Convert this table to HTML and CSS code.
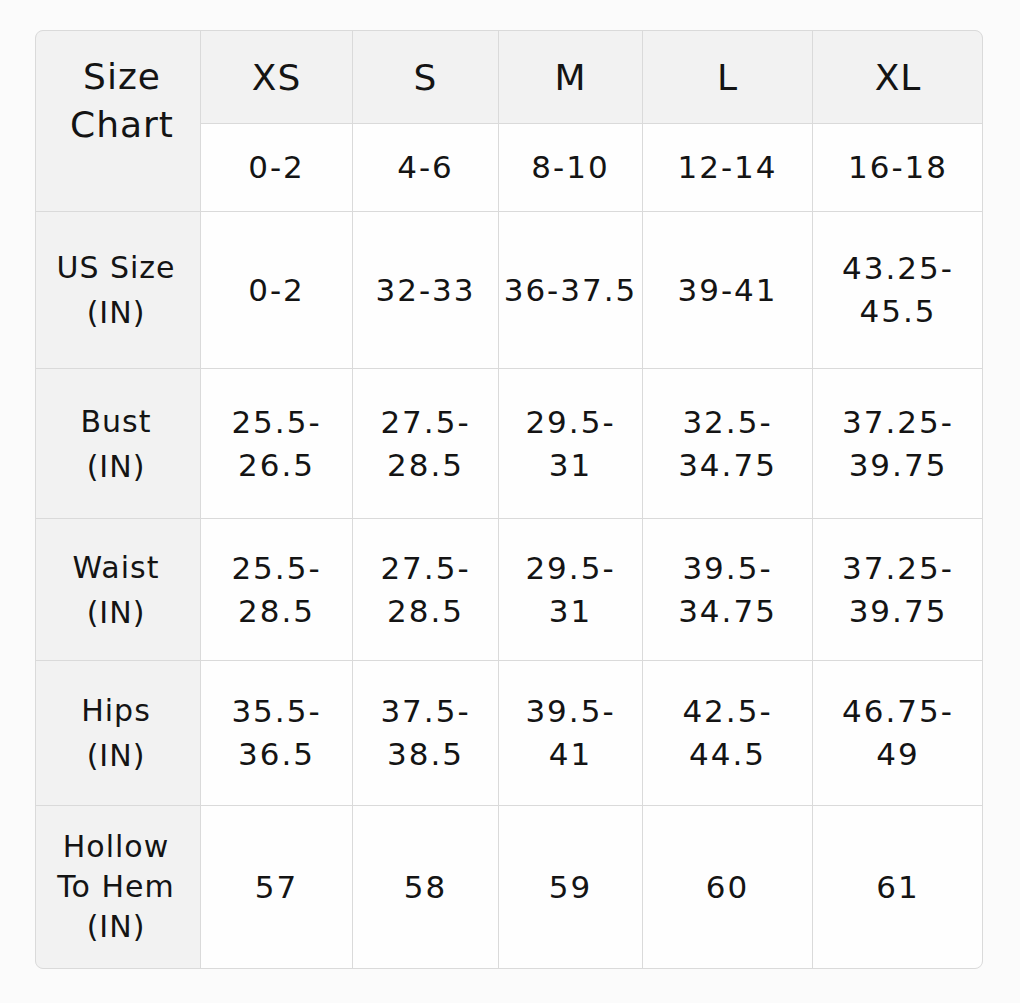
FILE: index.html
```html
<!DOCTYPE html>
<html lang="en">
<head>
<meta charset="utf-8">
<title>Size Chart</title>
<link rel="stylesheet" href="styles.css">
</head>
<body>
<div class="chart">
  <div class="cell corner">Size<br>Chart</div>
  <div class="cell head">XS</div>
  <div class="cell head">S</div>
  <div class="cell head">M</div>
  <div class="cell head">L</div>
  <div class="cell head">XL</div>

  <div class="cell">0-2</div>
  <div class="cell">4-6</div>
  <div class="cell">8-10</div>
  <div class="cell">12-14</div>
  <div class="cell">16-18</div>

  <div class="cell label">US Size<br>(IN)</div>
  <div class="cell">0-2</div>
  <div class="cell">32-33</div>
  <div class="cell">36-37.5</div>
  <div class="cell">39-41</div>
  <div class="cell">43.25-<br>45.5</div>

  <div class="cell label">Bust<br>(IN)</div>
  <div class="cell">25.5-<br>26.5</div>
  <div class="cell">27.5-<br>28.5</div>
  <div class="cell">29.5-<br>31</div>
  <div class="cell">32.5-<br>34.75</div>
  <div class="cell">37.25-<br>39.75</div>

  <div class="cell label">Waist<br>(IN)</div>
  <div class="cell">25.5-<br>28.5</div>
  <div class="cell">27.5-<br>28.5</div>
  <div class="cell">29.5-<br>31</div>
  <div class="cell">39.5-<br>34.75</div>
  <div class="cell">37.25-<br>39.75</div>

  <div class="cell label">Hips<br>(IN)</div>
  <div class="cell">35.5-<br>36.5</div>
  <div class="cell">37.5-<br>38.5</div>
  <div class="cell">39.5-<br>41</div>
  <div class="cell">42.5-<br>44.5</div>
  <div class="cell">46.75-<br>49</div>

  <div class="cell label tight">Hollow<br>To Hem<br>(IN)</div>
  <div class="cell">57</div>
  <div class="cell">58</div>
  <div class="cell">59</div>
  <div class="cell">60</div>
  <div class="cell">61</div>
</div>
</body>
</html>
```

FILE: styles.css
```css
html, body {
  margin: 0;
  padding: 0;
  background: #fbfbfb;
}

body {
  padding: 30px 0 0 35px;
  font-family: "DejaVu Sans", "Liberation Sans", sans-serif;
  color: #141414;
}

.chart {
  display: grid;
  width: 946px;
  grid-template-columns: 164px 151px 145px 143px 169px 170px;
  grid-template-rows: 92px 87px 156px 149px 141px 144px 162px;
  gap: 1px;
  background: #dadada;
  border: 1px solid #dadada;
  border-radius: 8px;
  overflow: hidden;
}

.cell {
  display: flex;
  align-items: center;
  justify-content: center;
  text-align: center;
  background: #fefefe;
  font-size: 31px;
  line-height: 43px;
  letter-spacing: 2px;
}

.head {
  background: #f2f2f2;
  font-size: 36px;
  letter-spacing: 1px;
}

.corner {
  grid-row: span 2;
  align-items: flex-start;
  padding-top: 22px;
  padding-left: 8px;
  background: #f2f2f2;
  font-size: 36px;
  line-height: 48px;
  letter-spacing: 1px;
}

.label {
  background: #f2f2f2;
  font-size: 30px;
  letter-spacing: 1px;
  padding-right: 4px;
  line-height: 45px;
}

.tight {
  line-height: 40px;
}
```
